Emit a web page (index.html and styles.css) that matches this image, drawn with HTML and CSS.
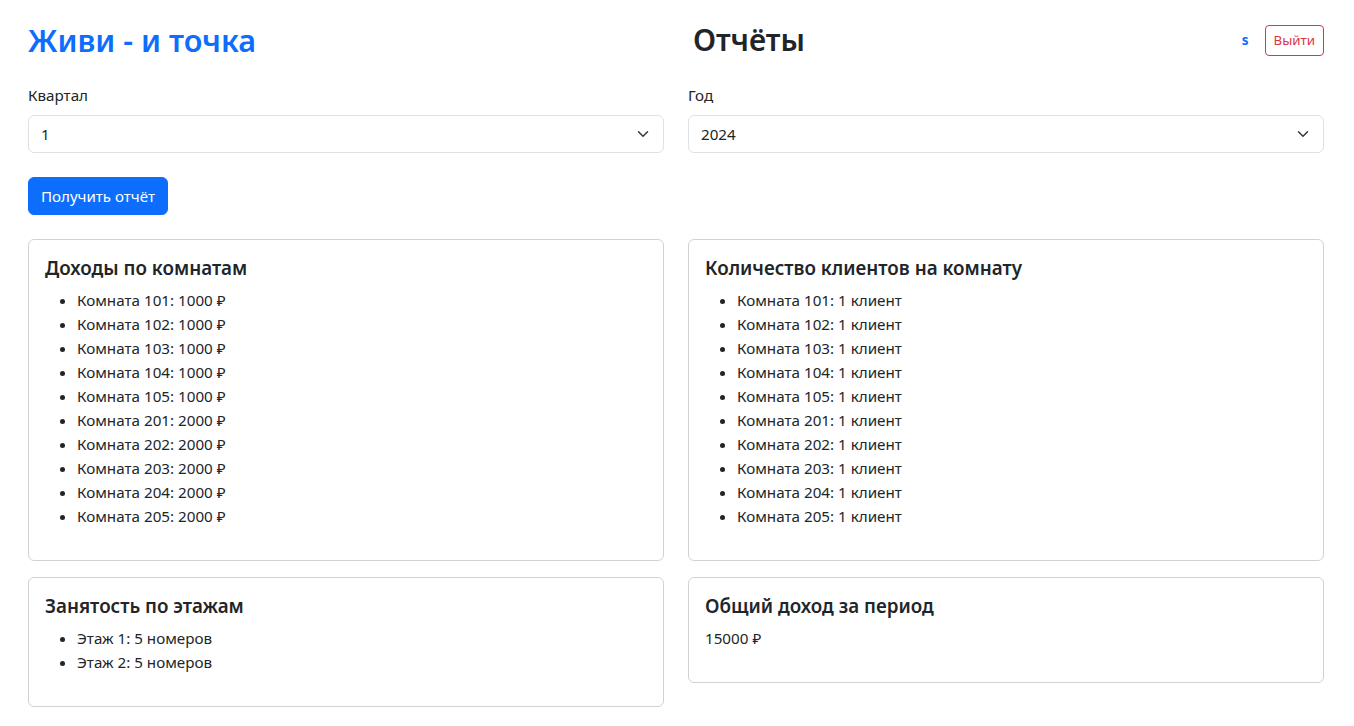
FILE: index.html
```html
<!DOCTYPE html>
<html lang="ru">
<head>
<meta charset="utf-8">
<title>Отчёты</title>
<link rel="stylesheet" href="styles.css">
</head>
<body>
<div class="page">
  <header class="header">
    <h2 class="brand">Живи - и точка</h2>
    <h1 class="page-title">Отчёты</h1>
    <div class="user">
      <span class="username">s</span>
      <button class="btn-logout" type="button">Выйти</button>
    </div>
  </header>

  <div class="filters">
    <div class="field">
      <label class="label">Квартал</label>
      <div class="select">
        <span>1</span>
        <svg class="chev" width="16" height="12" viewBox="0 0 16 16"><path d="M2 5l6 6 6-6" fill="none" stroke="#343a40" stroke-width="2" stroke-linecap="round" stroke-linejoin="round"/></svg>
      </div>
    </div>
    <div class="field">
      <label class="label">Год</label>
      <div class="select">
        <span>2024</span>
        <svg class="chev" width="16" height="12" viewBox="0 0 16 16"><path d="M2 5l6 6 6-6" fill="none" stroke="#343a40" stroke-width="2" stroke-linecap="round" stroke-linejoin="round"/></svg>
      </div>
    </div>
  </div>

  <button class="btn-primary" type="button">Получить отчёт</button>

  <div class="cards">
    <div class="card">
      <h5 class="card-title">Доходы по комнатам</h5>
      <ul class="list">
        <li>Комната 101: 1000 ₽</li>
        <li>Комната 102: 1000 ₽</li>
        <li>Комната 103: 1000 ₽</li>
        <li>Комната 104: 1000 ₽</li>
        <li>Комната 105: 1000 ₽</li>
        <li>Комната 201: 2000 ₽</li>
        <li>Комната 202: 2000 ₽</li>
        <li>Комната 203: 2000 ₽</li>
        <li>Комната 204: 2000 ₽</li>
        <li>Комната 205: 2000 ₽</li>
      </ul>
    </div>
    <div class="card">
      <h5 class="card-title">Количество клиентов на комнату</h5>
      <ul class="list">
        <li>Комната 101: 1 клиент</li>
        <li>Комната 102: 1 клиент</li>
        <li>Комната 103: 1 клиент</li>
        <li>Комната 104: 1 клиент</li>
        <li>Комната 105: 1 клиент</li>
        <li>Комната 201: 1 клиент</li>
        <li>Комната 202: 1 клиент</li>
        <li>Комната 203: 1 клиент</li>
        <li>Комната 204: 1 клиент</li>
        <li>Комната 205: 1 клиент</li>
      </ul>
    </div>
    <div class="card">
      <h5 class="card-title">Занятость по этажам</h5>
      <ul class="list">
        <li>Этаж 1: 5 номеров</li>
        <li>Этаж 2: 5 номеров</li>
      </ul>
    </div>
    <div class="card">
      <h5 class="card-title">Общий доход за период</h5>
      <p class="total">15000 ₽</p>
    </div>
  </div>
</div>
</body>
</html>
```

FILE: styles.css
```css
* { box-sizing: border-box; }
html, body { margin: 0; padding: 0; background: #fff; }
body {
  font-family: "Noto Sans", "DejaVu Sans", sans-serif;
  font-size: 15.2px;
  line-height: 24px;
  color: #212529;
}
.page { padding: 21px 30px 0 28px; }

.header {
  display: flex;
  justify-content: space-between;
  align-items: center;
  height: 38px;
  margin-bottom: 24px;
}
.brand, .page-title {
  margin: 0;
  font-size: 30.6px;
  line-height: 38px;
  font-weight: 600;
}
.brand { color: #0d6efd; }
.page-title { color: #212529; font-size: 29.9px; }
.user { display: flex; align-items: center; gap: 16px; }
.username { color: #0d6efd; font-weight: 700; font-size: 13.4px; }
.btn-logout {
  font-family: inherit;
  font-size: 13.3px;
  line-height: 21px;
  padding: 4px 8px;
  color: #dc3545;
  background: #fff;
  border: 1px solid #dc3545;
  border-radius: 4px;
}

.filters {
  display: grid;
  grid-template-columns: 1fr 1fr;
  column-gap: 24px;
  margin-bottom: 24px;
}
.label { display: block; margin-bottom: 8px; }
.select {
  height: 38px;
  border: 1px solid #dee2e6;
  border-radius: 6px;
  padding: 6px 12px 6px 12px;
  display: flex;
  align-items: center;
  justify-content: space-between;
}
.chev { flex: none; }

.btn-primary {
  font-family: inherit;
  font-size: 15.1px;
  line-height: 24px;
  padding: 6px 12px;
  color: #fff;
  background: #0d6efd;
  border: 1px solid #0d6efd;
  border-radius: 6px;
  margin-bottom: 24px;
  display: block;
}

.cards {
  display: grid;
  grid-template-columns: 1fr 1fr;
  column-gap: 24px;
  row-gap: 16px;
  align-items: start;
}
.card {
  border: 1px solid rgba(0,0,0,.175);
  border-radius: 6px;
  padding: 16px;
}
.card-title {
  margin: 0 0 8px;
  font-size: 18.8px;
  line-height: 24px;
  font-weight: 600;
}
.list { margin: 0 0 16px; padding-left: 32px; }
.total { margin: 0 0 16px; }
```
